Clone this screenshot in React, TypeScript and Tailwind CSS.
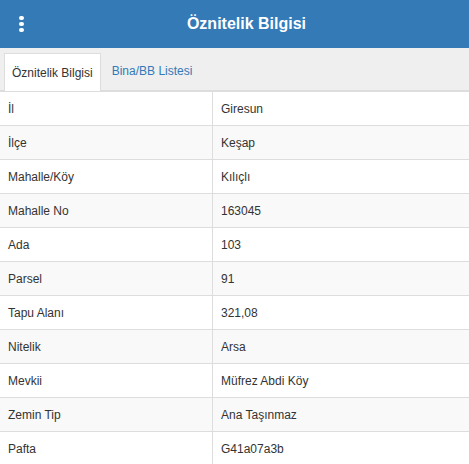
const rows: [string, string][] = [
  ["İl", "Giresun"],
  ["İlçe", "Keşap"],
  ["Mahalle/Köy", "Kılıçlı"],
  ["Mahalle No", "163045"],
  ["Ada", "103"],
  ["Parsel", "91"],
  ["Tapu Alanı", "321,08"],
  ["Nitelik", "Arsa"],
  ["Mevkii", "Müfrez Abdi Köy"],
  ["Zemin Tip", "Ana Taşınmaz"],
  ["Pafta", "G41a07a3b"],
];

export default function App() {
  return (
    <div className="w-[469px] h-[464px] overflow-hidden bg-white font-['Liberation_Sans',Arial,sans-serif] text-[#333]">
      {/* Header */}
      <div className="relative h-12 bg-[#337ab7] flex items-center justify-center">
        <div className="absolute left-[19px] top-[16px] flex flex-col gap-[2px]">
          <span className="w-[5px] h-[4px] rounded-full bg-white" />
          <span className="w-[5px] h-[4px] rounded-full bg-white" />
          <span className="w-[5px] h-[4px] rounded-full bg-white" />
        </div>
        <h1 className="ml-6 text-white text-[16px] font-bold">Öznitelik Bilgisi</h1>
      </div>

      {/* Tabs */}
      <div className="h-[43px] bg-[#efefef] border-b border-[#ddd] flex items-end pl-1">
        <div className="h-[38px] -mb-px px-[7px] flex items-center bg-white border border-b-0 border-[#ddd] text-[12px] text-[#333]">
          Öznitelik Bilgisi
        </div>
        <div className="h-[38px] px-[11px] flex items-center text-[12px] text-[#337ab7]">
          Bina/BB Listesi
        </div>
      </div>

      {/* Table */}
      <div className="text-[12px]">
        {rows.map(([label, value], i) => (
          <div
            key={label}
            className={`flex h-[34px] border-t border-[#ddd] ${i % 2 === 1 ? "bg-[#f9f9f9]" : "bg-white"}`}
          >
            <div className="w-[213px] shrink-0 border-r border-[#ddd] px-2 flex items-center">{label}</div>
            <div className="flex-1 px-2 flex items-center">{value}</div>
          </div>
        ))}
      </div>
    </div>
  );
}
